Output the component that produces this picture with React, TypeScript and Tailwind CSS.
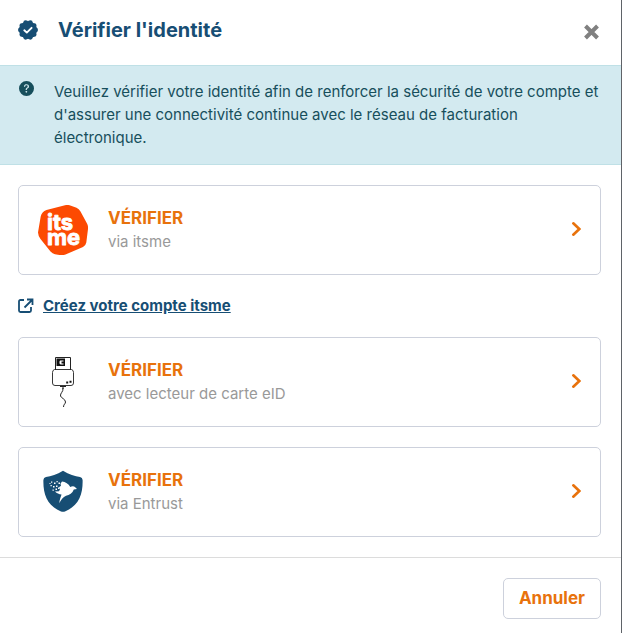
import React from "react";
import { BsQuestionCircleFill } from "react-icons/bs";

interface VerifyOptionProps {
    logo: React.ReactNode;
    desc: string;
}

const VerifiedBadge: React.FC = () => (
    <svg viewBox="0 0 20 20" className="w-5 h-5 text-[#174e74]" fill="none" aria-hidden="true">
        <circle cx="10" cy="10" r="9" fill="currentColor" />
        {/* round dashes make the scalloped edge */}
        <circle
            cx="10"
            cy="10"
            r="7.600"
            stroke="currentColor"
            strokeWidth="4.800"
            strokeLinecap="round"
            pathLength="120"
            strokeDasharray="0 12"
        />
        <path d="M6.300 10.300 8.800 12.600 13.600 7.800" stroke="#fff" strokeWidth="1.900" strokeLinecap="round" strokeLinejoin="round" />
    </svg>
);

const ItsmeLogo: React.FC = () => (
    <svg viewBox="0 0 50 50" className="w-[50px] h-[50px]" aria-hidden="true">
        <path
            d="M8.500 5 27 .2Q30-.5 33 .7L38.500 2.700Q41 3.700 42.500 6.500L49 18.500Q50.300 21 50 24L48.300 37.500Q47.800 40.500 45 42L27.500 49.600Q24.500 50.500 21.500 50L17 49.300Q14.500 48.800 12.500 46.500L2.500 34Q.2 31 0 27.500L2.700 11.500Q3.800 6.500 8.500 5Z"
            fill="#fc4a02"
        />
        <text
            fill="#fff"
            stroke="#fff"
            strokeWidth=".8"
            strokeLinejoin="round"
            fontFamily="Inter, sans-serif"
            fontWeight="700"
            fontSize="22"
        >
            <tspan x="9" y="25">its</tspan>
            <tspan x="9" y="39.500">me</tspan>
        </text>
    </svg>
);

const CardReaderLogo: React.FC = () => (
    <svg viewBox="0 0 50 50" className="w-[50px] h-[50px]" fill="none" stroke="#222" aria-hidden="true">
        <path d="M17.500 13V.5h15V13" />
        <path d="M16.500 12.500h17q2 .5 2 3V26q0 2.500-2.500 2.500H17q-2.500 0-2.500-2.500V15.500q0-2.500 2-3Z" strokeWidth=".9" />
        <path d="M18.500 1.500h8.500v7.500h-8.500z" fill="#111" stroke="none" />
        <path d="M22 3.500h3.500v1h-2v2h2v1h-3l-1-1v-2z" fill="#fff" stroke="none" />
        <path d="M28.200 24.500h2v2h-2zM31.500 23.800h2v2h-2z" fill="#111" stroke="none" />
        <path d="M22 29.500h6M24 31h2" />
        <path d="M25 31c.5 4-3 5-2.500 8 .5 2 5 3 5 6 0 2-2 2-2 5" />
    </svg>
);

const EntrustLogo: React.FC = () => (
    <svg viewBox="0 0 50 50" className="w-[50px] h-[50px]" aria-hidden="true">
        <path
            d="M25 3.800C31 7.500 37 9.300 42 10q2.500.4 2.600 3C45 27 41 39 27 44.400q-2 .8-4 0C9 39 5 27 5.400 13q.1-2.600 2.600-3C13 9.300 19 7.500 25 3.800Z"
            fill="#174e74"
        />
        <g fill="#fff">
            <path d="M24 14.500c3.500.5 6.500 2 8.300 5.500 1.700-1.200 3.900-1 4.900.2L39 22l-3.200.4C34.500 26 31.500 28 28 28.800c-3 1.200-4.500 3.700-6.700 7.400.2-4 1.700-6.500 2.200-8.700-2.500-.3-4.700-1.300-6.500-3l4-.2 1-2-1-2 2-1.500-.5-2Z" />
            <path d="M13 14.500h1.300v1.300H13zM16 15.500h1.500V17H16zM12.500 18h1.300v1.300h-1.300zM15 19h1.500v1.500H15zM18.500 14h1.200v1.200h-1.200zM20.500 15.500H22V17h-1.500zM14.500 22.500h1.300v1.300h-1.300zM18 18.500h1.500v1.500H18zM17.500 21.500h1.500V23h-1.500zM20 20.500h1.500V22H20zM11.500 16h1v1h-1z" />
        </g>
    </svg>
);

const ChevronIcon: React.FC = () => (
    <svg viewBox="0 0 10 18" className="w-[10px] h-[18px]" fill="none" stroke="#e8720c" strokeWidth="2.600" aria-hidden="true">
        <path d="M2.300 2.300 8.300 8l-6 5.700" strokeLinecap="round" />
    </svg>
);

const VerifyOption: React.FC<VerifyOptionProps> = ({ logo, desc }) => {
    return (
        <button
            type="button"
            className="w-full flex items-center gap-5 px-[19px] py-[19px] border border-[#cdd1dc] rounded-[5px] bg-white text-left"
        >
            {logo}
            <span className="flex-1 flex flex-col">
                <span className="text-[17px] leading-6 font-bold text-[#e8720c]">VÉRIFIER</span>
                <span className="text-[15px] leading-6 text-[#999]">{desc}</span>
            </span>
            <ChevronIcon />
        </button>
    );
};

const App: React.FC = () => {
    return (
        <div
            role="dialog"
            aria-labelledby="dialog-title"
            className="w-full min-h-screen bg-white border-r border-[#5f6368] font-['Inter',sans-serif]"
        >
            {/* Header */}
            <header className="flex items-center h-[65px] pl-[18px] pr-5 pb-[6px]">
                <VerifiedBadge />
                <h1 id="dialog-title" className="flex-1 pl-5 text-[20px] leading-7 font-bold text-[#174e74]">
                    Vérifier l'identité
                </h1>
                <button type="button" aria-label="Fermer" className="pt-1">
                    <svg viewBox="0 0 18 18" className="w-[18px] h-[18px]" stroke="#808080" strokeWidth="4">
                        <path d="M2.500 3l12 12M14.500 3l-12 12" />
                    </svg>
                </button>
            </header>

            {/* Info banner */}
            <div className="flex gap-5 pl-[19px] pr-5 pt-[14px] pb-[15px] bg-[#d3eaf0] border-y border-[#bfe0e6]">
                <BsQuestionCircleFill className="shrink-0 mt-px w-[15px] h-[15px] text-[#174f5c]" aria-hidden="true" />
                <p className="text-[15px] leading-[23px] text-[#174f5c]">
                    Veuillez vérifier votre identité afin de renforcer la sécurité de votre compte et d'assurer une
                    connectivité continue avec le réseau de facturation électronique.
                </p>
            </div>

            {/* Verification methods */}
            <main className="flex flex-col gap-5 pl-[18px] pr-5 py-5">
                <VerifyOption logo={<ItsmeLogo />} desc="via itsme" />
                <a href="#itsme" className="flex items-center gap-[9px] text-[15px] leading-[22px] font-bold text-[#174e74]">
                    <svg viewBox="0 0 16 16" className="w-4 h-4" fill="none" stroke="currentColor" strokeWidth="1.800" aria-hidden="true">
                        <path d="M6 2H2.500Q1 2 1 3.500v9Q1 14 2.500 14h9q1.500 0 1.500-1.500V9" />
                        <path d="M9 1.500H14.500V7M14 2 6.500 9.500" />
                    </svg>
                    <span className="underline">Créez votre compte itsme</span>
                </a>
                <VerifyOption logo={<CardReaderLogo />} desc="avec lecteur de carte eID" />
                <VerifyOption logo={<EntrustLogo />} desc="via Entrust" />
            </main>

            {/* Footer */}
            <footer className="flex justify-end pr-5 py-5 border-t border-[#dcdcdc]">
                <button
                    type="button"
                    className="px-[15px] py-[7px] border border-[#cdd1dc] rounded-[5px] text-[17px] leading-[25px] font-bold text-[#e8720c]"
                >
                    Annuler
                </button>
            </footer>
        </div>
    );
};

export default App;
